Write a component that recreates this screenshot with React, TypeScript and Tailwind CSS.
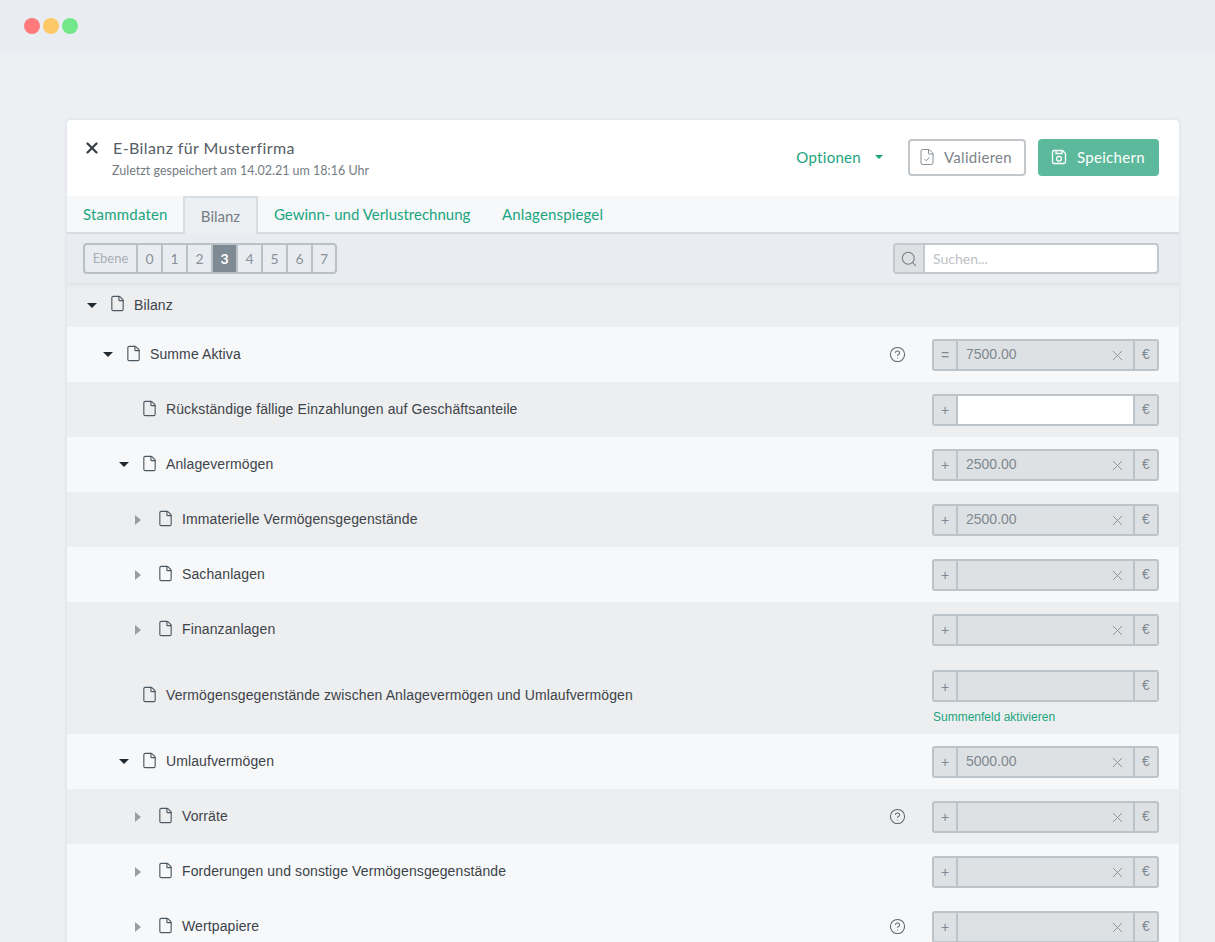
import { CircleHelp, File, FileCheck, Search, X } from "lucide-react"

type Row = {
  label: string
  level: 0 | 1 | 2 | 3
  arrow?: "open" | "closed"
  dark: boolean
  sign?: string
  value?: string
  clear?: boolean
  white?: boolean
  help?: boolean
  sum?: boolean
  noGroup?: boolean
  height: string
}

const rows: Row[] = [
  { label: "Bilanz", level: 0, arrow: "open", dark: true, noGroup: true, height: "h-[44px]" },
  { label: "Summe Aktiva", level: 1, arrow: "open", dark: false, sign: "=", value: "7500.00", clear: true, help: true, height: "h-[55px]" },
  { label: "Rückständige fällige Einzahlungen auf Geschäftsanteile", level: 2, dark: true, white: true, height: "h-[55px]" },
  { label: "Anlagevermögen", level: 2, arrow: "open", dark: false, value: "2500.00", clear: true, height: "h-[55px]" },
  { label: "Immaterielle Vermögensgegenstände", level: 3, arrow: "closed", dark: true, value: "2500.00", clear: true, height: "h-[55px]" },
  { label: "Sachanlagen", level: 3, arrow: "closed", dark: false, clear: true, height: "h-[55px]" },
  { label: "Finanzanlagen", level: 3, arrow: "closed", dark: true, clear: true, height: "h-[55px]" },
  { label: "Vermögensgegenstände zwischen Anlagevermögen und Umlaufvermögen", level: 2, dark: true, sum: true, height: "h-[77px]" },
  { label: "Umlaufvermögen", level: 2, arrow: "open", dark: false, value: "5000.00", clear: true, height: "h-[55px]" },
  { label: "Vorräte", level: 3, arrow: "closed", dark: true, clear: true, help: true, height: "h-[55px]" },
  { label: "Forderungen und sonstige Vermögensgegenstände", level: 3, arrow: "closed", dark: false, clear: true, height: "h-[55px]" },
  { label: "Wertpapiere", level: 3, arrow: "closed", dark: false, clear: true, help: true, height: "h-[55px]" },
]

const indent = ["pl-[20px]", "pl-[36px]", "pl-[52px]", "pl-[68px]"]

const headFont = "font-['Lato','Noto_Sans',sans-serif]"

function SaveIcon() {
  return (
    <svg width="16" height="16" viewBox="0 0 16 16" fill="none" stroke="currentColor" strokeWidth="1.3">
      <path d="M3 1.5h8.5l3 3V13a1.5 1.5 0 0 1-1.5 1.5H3A1.5 1.5 0 0 1 1.5 13V3A1.5 1.5 0 0 1 3 1.5Z" />
      <path d="M5 1.5v3h6v-3" />
      <circle cx="8" cy="9.8" r="2.4" />
    </svg>
  )
}

function Arrow({ kind }: { kind?: "open" | "closed" }) {
  return (
    <span className="flex w-[22px] shrink-0 items-center">
      {kind === "open" && (
        <span className="h-0 w-0 border-x-[5px] border-t-[5px] border-x-transparent border-t-[#222a30]" />
      )}
      {kind === "closed" && (
        <span className="h-0 w-0 border-y-[5px] border-l-[6px] border-y-transparent border-l-[#9a9ea2]" />
      )}
    </span>
  )
}

function AmountField({ row }: { row: Row }) {
  return (
    <div className="flex h-[32px] w-[227px] overflow-hidden rounded-[3px] border-2 border-[#bdc4c9] bg-[#dee1e4] text-[#80888f]">
      <span className="flex w-[24px] shrink-0 items-center justify-center border-r-2 border-[#bdc4c9] pt-[2px] text-[14px]">
        {row.sign ?? "+"}
      </span>
      <div className={`flex flex-1 items-center justify-between pl-[8px] pr-[7px] text-[14px] ${row.white ? "bg-white" : ""}`}>
        <span>{row.value}</span>
        {row.clear && <X className="mt-[1px] h-[17px] w-[17px] text-[#8f969c]" strokeWidth={1.4} />}
      </div>
      <span className="flex w-[24px] shrink-0 items-center justify-center border-l-2 border-[#bdc4c9] pb-[1px] text-[14px]">
        €
      </span>
    </div>
  )
}

function TreeRow({ row }: { row: Row }) {
  return (
    <div
      className={`flex items-center pr-[20px] ${row.height} ${indent[row.level]} ${row.dark ? "bg-[#edeef0]" : "bg-[#f6f8fa]"}`}
    >
      <Arrow kind={row.arrow} />
      <File className="mb-[3px] h-[17px] w-[17px] shrink-0 text-[#4e5860]" strokeWidth={1.6} />
      <span className="ml-[8px] flex-1 text-[14px] tracking-[0.11px] text-[#3d4349]">{row.label}</span>
      {row.help && <CircleHelp className="mr-[26px] mb-[1px] h-[17px] w-[17px] text-[#5f666c]" strokeWidth={1.5} />}
      {!row.noGroup && (
        <div className={`w-[227px] ${row.sum ? "pt-[3px]" : ""}`}>
          <AmountField row={row} />
          {row.sum && <p className="mt-[8px] pl-[1px] text-[12px] leading-[14px] text-[#1aa57e]">Summenfeld aktivieren</p>}
        </div>
      )}
    </div>
  )
}

export default function App() {
  return (
    <div className="h-[942px] overflow-hidden bg-[#edf0f3] font-['Liberation_Sans',sans-serif]">
      <div className="flex h-[53px] items-center gap-[3px] bg-[#e9edf1] pb-[1px] pl-[24px]">
        <span className="h-[16px] w-[16px] rounded-full bg-[#ff7b7b]" />
        <span className="h-[16px] w-[16px] rounded-full bg-[#fdc868]" />
        <span className="h-[16px] w-[16px] rounded-full bg-[#73e88a]" />
      </div>

      <div className="ml-[67px] mt-[67px] w-[1112px] overflow-hidden rounded-t-[4px] shadow-[0_0_4px_rgba(60,70,80,0.12)]">
        {/* Header */}
        <div className={`flex h-[76px] items-center bg-white pl-[16px] pr-[20px] ${headFont}`}>
          <X className="mb-[20px] h-[18px] w-[18px] text-[#3a4249]" strokeWidth={3} />
          <div className="ml-[12px] flex-1">
            <h1 className="text-[16px] leading-[20px] tracking-[0.4px] text-[#565d64]">E-Bilanz für Musterfirma</h1>
            <p className="mt-[5px] -ml-[1px] text-[12.5px] leading-[16px] text-[#757c83]">
              Zuletzt gespeichert am 14.02.21 um 18:16 Uhr
            </p>
          </div>
          <span className="-mt-[2px] text-[15px] tracking-[0.3px] text-[#1aa57e]">Optionen</span>
          <span className="-mt-[2px] ml-[14px] mr-[25px] h-0 w-0 border-x-[4px] border-t-[4px] border-x-transparent border-t-[#1aa57e]" />
          <button className="-mt-[2px] flex h-[37px] w-[118px] items-center rounded-[4px] border-2 border-[#c2c7cb] pl-[8px] text-[15px] tracking-[0.3px] text-[#7d848a]">
            <FileCheck className="h-[18px] w-[18px]" strokeWidth={1.2} />
            <span className="ml-[8px]">Validieren</span>
          </button>
          <button className="-mt-[2px] ml-[12px] flex h-[37px] w-[121px] items-center rounded-[4px] bg-[#5cb99b] pl-[13px] text-[15px] tracking-[0.3px] text-white">
            <SaveIcon />
            <span className="ml-[10px]">Speichern</span>
          </button>
        </div>

        {/* Tabs */}
        <div className={`flex h-[38px] items-end border-b-2 border-[#d8dde1] bg-[#f6f8fa] text-[15px] text-[#1aa57e] ${headFont}`}>
          <span className="ml-[16px] h-[36px] w-[101px] leading-[37px] tracking-[0.2px]">Stammdaten</span>
          <span className="-mb-[2px] -ml-[1px] h-[38px] w-[75px] border-2 border-b-0 border-[#d8dde1] bg-[#edf0f3] text-center leading-[36px] text-[#757c83]">
            Bilanz
          </span>
          <span className="ml-[16px] h-[36px] w-[228px] leading-[37px]">Gewinn- und Verlustrechnung</span>
          <span className="h-[36px] leading-[37px] tracking-[0.15px]">Anlagenspiegel</span>
        </div>

        {/* Toolbar */}
        <div className={`relative flex h-[49px] items-start justify-between bg-[#e9edf1] pl-[16px] pr-[20px] pt-[9px] shadow-[0_2px_4px_rgba(60,70,80,0.08)] ${headFont}`}>
          <div className="flex h-[31px] overflow-hidden rounded-[4px] border-2 border-[#b9c0c6] text-[14px] text-[#8a9198]">
            <span className="flex w-[53px] items-center justify-center border-r-2 border-[#b9c0c6] text-[13px] text-[#a8aeb3]">Ebene</span>
            {["0", "1", "2", "3", "4", "5", "6", "7"].map((n) => (
              <span
                key={n}
                className={`flex w-[25px] items-center justify-center border-r-2 border-[#b9c0c6] last:w-[22px] last:border-r-0 ${
                  n === "3" ? "bg-[#7f8b94] font-bold text-white" : ""
                }`}
              >
                {n}
              </span>
            ))}
          </div>
          <div className="flex h-[31px] w-[266px] overflow-hidden rounded-[4px] border-2 border-[#c2c8cd] bg-white">
            <span className="flex w-[30px] shrink-0 items-center justify-center border-r-2 border-[#c2c8cd] bg-[#dee1e4]">
              <Search className="h-[18px] w-[18px] text-[#777f86]" strokeWidth={1.4} />
            </span>
            <span className="flex items-center pl-[8px] text-[14px] text-[#bcc1c5]">Suchen...</span>
          </div>
        </div>

        {/* Tree */}
        {rows.map((row) => (
          <TreeRow key={row.label} row={row} />
        ))}
      </div>
    </div>
  )
}
